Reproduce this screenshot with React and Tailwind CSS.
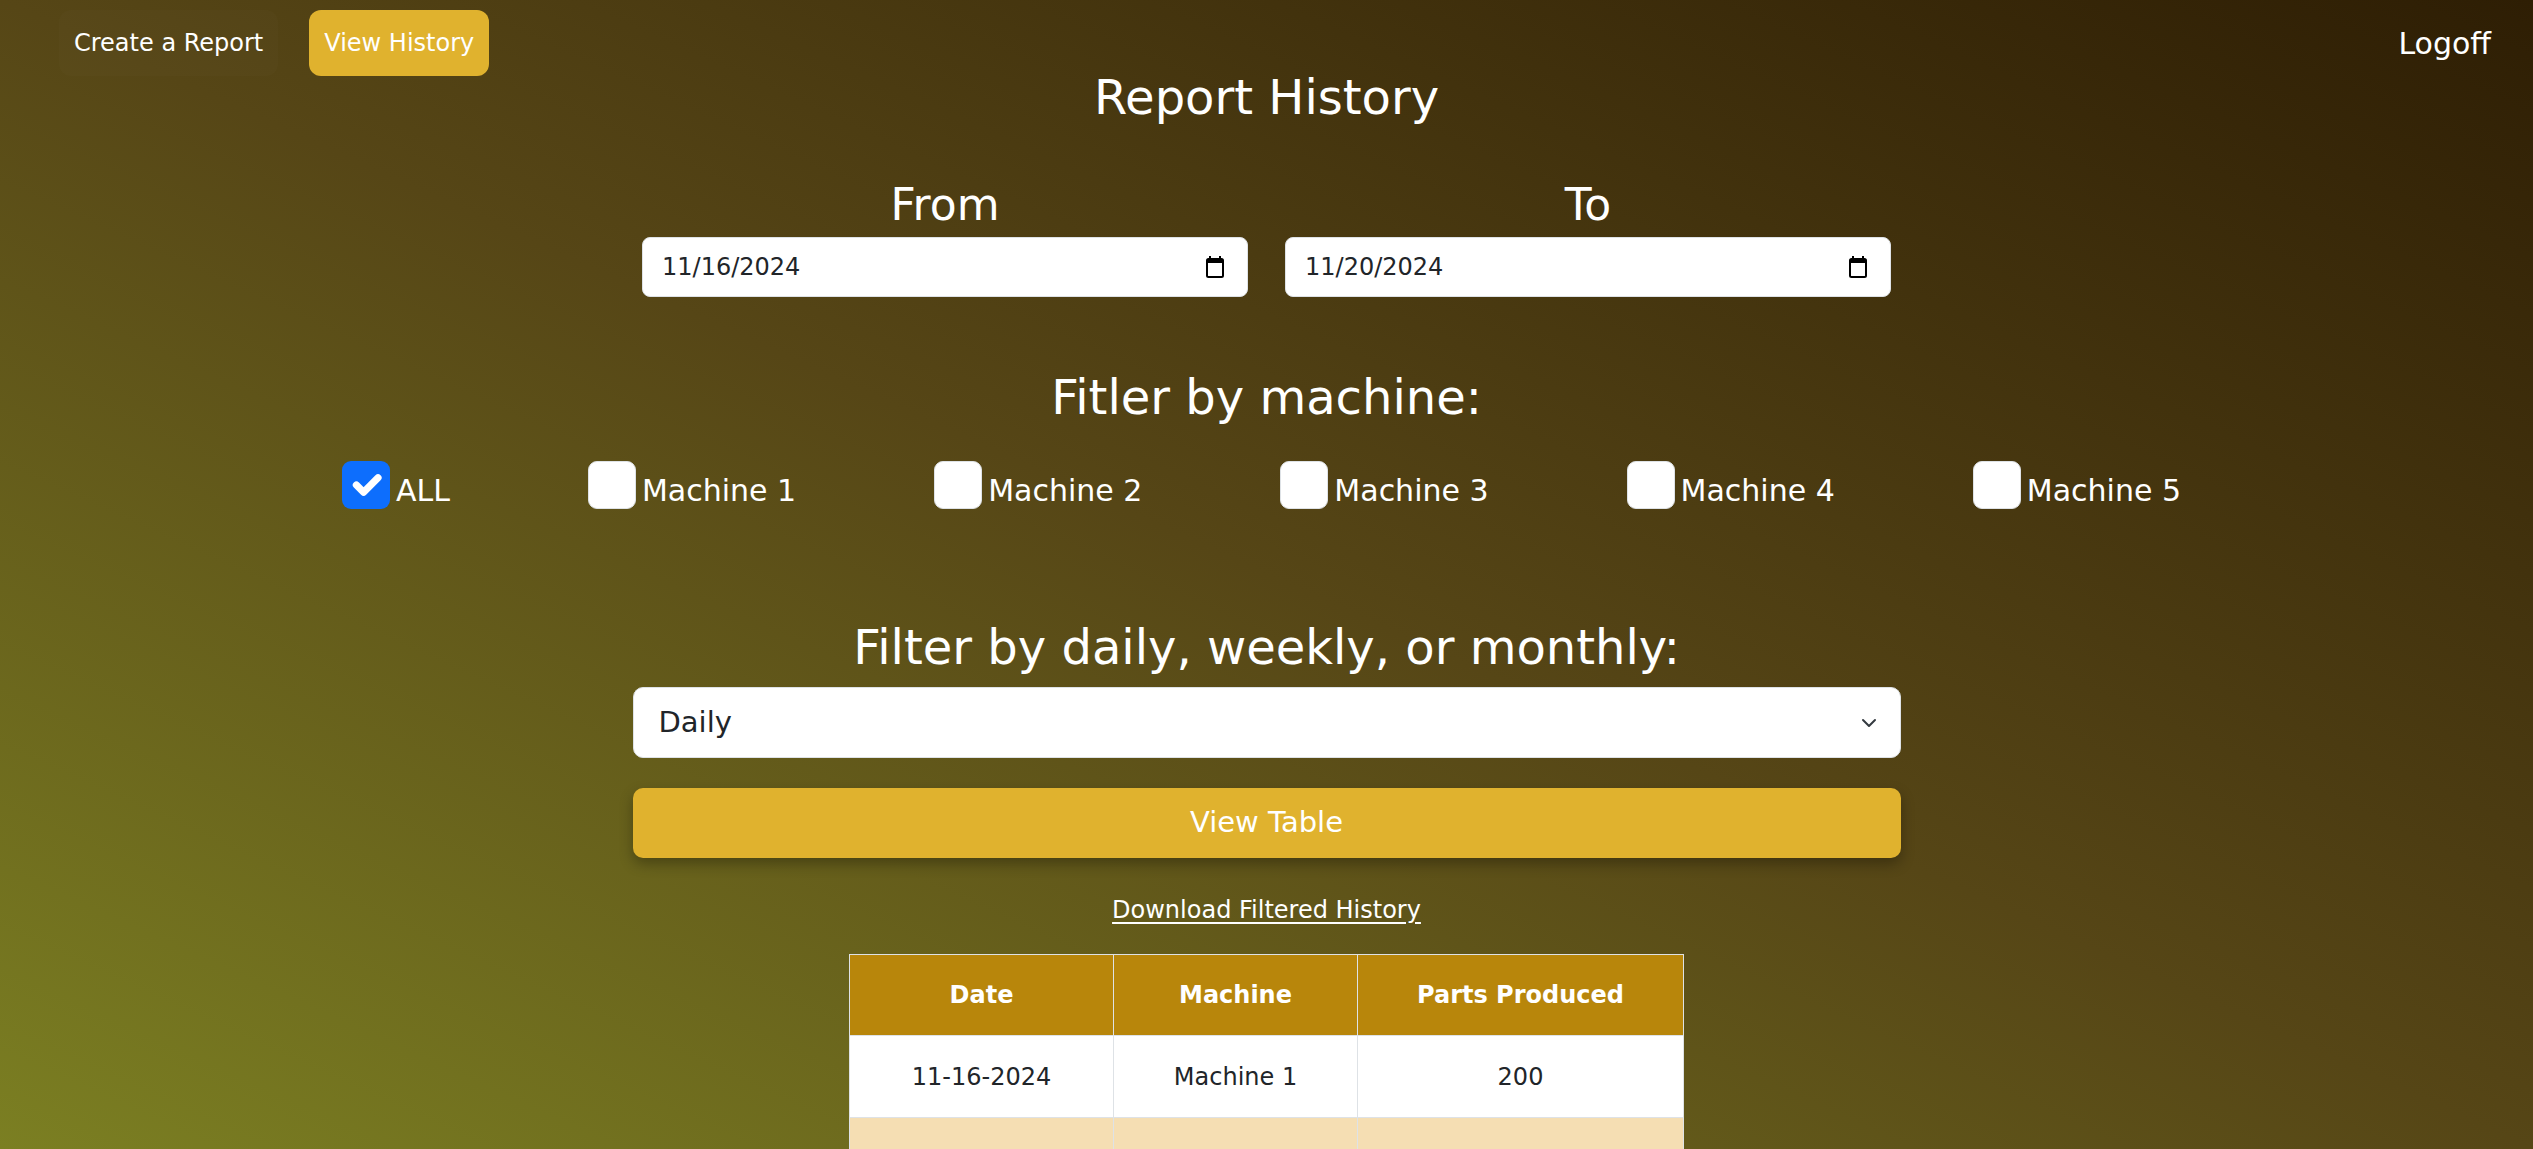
const machines = ["ALL", "Machine 1", "Machine 2", "Machine 3", "Machine 4", "Machine 5"];

// second row runs past the bottom edge in the shot, its values are not visible
const rows = [
  { date: "11-16-2024", machine: "Machine 1", parts: 200 },
  { date: "", machine: "", parts: "" },
];

function CalendarIcon() {
  return (
    <svg width="20" height="22" viewBox="0 0 20 22" fill="none">
      <rect x="4" y="0" width="2" height="4" fill="#000" />
      <rect x="14" y="0" width="2" height="4" fill="#000" />
      <rect x="2" y="3" width="16" height="18" rx="1.5" stroke="#000" strokeWidth="2" />
      <rect x="2" y="3" width="16" height="4" fill="#000" />
    </svg>
  );
}

function DateField({ label, value }) {
  return (
    <div className="flex w-[606px] flex-col items-center">
      <div className="text-[44px] leading-[44px] text-white">{label}</div>
      <div className="mt-[10px] flex h-[60px] w-full items-center justify-between rounded-[8px] border border-[#dee2e6] bg-white pl-[19px] pr-[22px] text-[24px] text-[#212529]">
        <span>{value}</span>
        <CalendarIcon />
      </div>
    </div>
  );
}

function MachineCheck({ name, checked }) {
  return (
    <label className="flex items-start gap-[6px]">
      {checked ? (
        <span className="flex h-12 w-12 items-center justify-center rounded-[9px] bg-[#0d6efd]">
          <svg width="48" height="48" viewBox="0 0 20 20" fill="none">
            <path d="M6 10l3 3l6-6" stroke="#fff" strokeWidth="3" strokeLinecap="round" strokeLinejoin="round" />
          </svg>
        </span>
      ) : (
        <span className="h-12 w-12 rounded-[9px] border border-[#dee2e6] bg-white" />
      )}
      <span className="mt-[6px] text-[30px] leading-[48px] text-white">{name}</span>
    </label>
  );
}

export default function App() {
  return (
    <div className="h-screen overflow-hidden bg-[linear-gradient(to_top_right,#7b7f22_0%,#564616_50%,#2e1e04_100%)] pt-[10px] font-['DejaVu_Sans',sans-serif]">
      {/* nav */}
      <div className="flex h-[66px] items-center justify-between pl-[59px] pr-[42px]">
        <div className="flex h-full gap-[31px]">
          <button className="flex h-full items-center rounded-[12px] bg-white/[0.015] px-[15px] text-[24px] text-white">
            Create a Report
          </button>
          <button className="flex h-full items-center rounded-[12px] bg-[#e0b22e] px-[15px] text-[24px] text-white">
            View History
          </button>
        </div>
        <button className="text-[30px] text-white">Logoff</button>
      </div>

      <div className="flex flex-col items-center">
        <h1 className="mt-[-3px] text-[48px] leading-[48px] text-white">Report History</h1>

        <div className="mt-[62px] flex gap-[37px]">
          <DateField label="From" value="11/16/2024" />
          <DateField label="To" value="11/20/2024" />
        </div>

        <h2 className="mt-[76px] text-[48px] leading-[48px] text-white">Fitler by machine:</h2>

        <div className="mr-[10px] mt-[40px] flex gap-[138px]">
          {machines.map((m, i) => (
            <MachineCheck key={m} name={m} checked={i === 0} />
          ))}
        </div>

        <h2 className="mt-[108px] text-[48px] leading-[48px] text-white">
          Filter by daily, weekly, or monthly:
        </h2>

        <div className="mt-[16px] flex h-[71px] w-[1268px] items-center justify-between rounded-[10px] border border-[#dee2e6] bg-white pl-[25px] pr-[23px] text-[29px] text-[#212529]">
          <span>Daily</span>
          <svg width="16" height="10" viewBox="0 0 16 10" fill="none">
            <path d="M2 2l6 6l6-6" stroke="#343a40" strokeWidth="2" strokeLinecap="round" strokeLinejoin="round" />
          </svg>
        </div>

        <button className="mt-[30px] h-[70px] w-[1268px] rounded-[10px] bg-[#e0b22e] text-[29px] text-white shadow-[0_6px_14px_rgba(0,0,0,0.3)]">
          View Table
        </button>

        <a className="mt-[40px] text-[24px] leading-[24px] text-white underline underline-offset-[4px]" href="#">
          Download Filtered History
        </a>

        <table className="mt-[32px] w-[834px] table-fixed border-collapse text-center text-[24px]">
          <colgroup>
            <col className="w-[264px]" />
            <col className="w-[244px]" />
            <col className="w-[326px]" />
          </colgroup>
          <thead>
            <tr className="bg-[#b8860b] text-white">
              <th className="h-[81px] border border-[#dee2e6] font-bold">Date</th>
              <th className="h-[81px] border border-[#dee2e6] font-bold">Machine</th>
              <th className="h-[81px] border border-[#dee2e6] font-bold">Parts Produced</th>
            </tr>
          </thead>
          <tbody>
            {rows.map((r, i) => (
              <tr key={i} className={i % 2 === 0 ? "bg-white text-[#212529]" : "bg-[#f5deb3] text-[#212529]"}>
                <td className="h-[82px] border border-[#dee2e6]">{r.date}</td>
                <td className="h-[82px] border border-[#dee2e6]">{r.machine}</td>
                <td className="h-[82px] border border-[#dee2e6]">{r.parts}</td>
              </tr>
            ))}
          </tbody>
        </table>
      </div>
    </div>
  );
}
